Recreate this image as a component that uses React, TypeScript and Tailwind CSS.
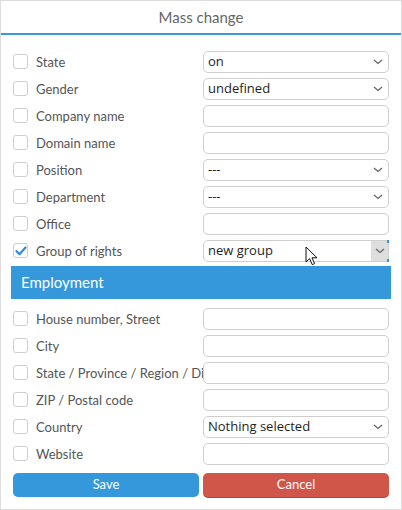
import React from 'react';

type Field = { label: string; kind: 'select' | 'input'; value?: string; checked?: boolean; focused?: boolean };

const general: Field[] = [
  { label: 'State', kind: 'select', value: 'on' },
  { label: 'Gender', kind: 'select', value: 'undefined' },
  { label: 'Company name', kind: 'input' },
  { label: 'Domain name', kind: 'input' },
  { label: 'Position', kind: 'select', value: '---' },
  { label: 'Department', kind: 'select', value: '---' },
  { label: 'Office', kind: 'input' },
  { label: 'Group of rights', kind: 'select', value: 'new group', checked: true, focused: true },
];

const employment: Field[] = [
  { label: 'House number, Street', kind: 'input' },
  { label: 'City', kind: 'input' },
  { label: 'State / Province / Region / District', kind: 'input' },
  { label: 'ZIP / Postal code', kind: 'input' },
  { label: 'Country', kind: 'select', value: 'Nothing selected' },
  { label: 'Website', kind: 'input' },
];

function Chevron() {
  return (
    <svg width="10" height="6" viewBox="0 0 10 6" fill="none">
      <path d="M1 1l4 3.5L9 1" stroke="#666" strokeWidth="1.3" />
    </svg>
  );
}

function Checkbox({ checked }: { checked?: boolean }) {
  return (
    <span className="flex h-[15px] w-[15px] shrink-0 items-center justify-center rounded-[3px] border border-[#cfcfcf] bg-white">
      {checked && (
        <svg width="12" height="10" viewBox="0 0 12 10" fill="none">
          <path d="M1.5 5.2l3 3L10.5 1.5" stroke="#2d8ad8" strokeWidth="2.2" strokeLinecap="round" strokeLinejoin="round" />
        </svg>
      )}
    </span>
  );
}

function Control({ f }: { f: Field }) {
  if (f.kind === 'input') {
    return <div className="h-[22px] w-[186px] rounded-[5px] border border-[#cfcfcf] bg-white" />;
  }
  if (f.focused) {
    return (
      <div className="relative flex h-[22px] w-[186px] items-center rounded-l-[5px] border border-[#cfcfcf] bg-white">
        <span className="flex-1 pl-[4px] text-[13px] text-[#1e1e1e] [font-family:'Open_Sans',sans-serif]">{f.value}</span>
        <span className="flex h-full w-[17px] items-center justify-center bg-[#dedede]">
          <Chevron />
        </span>
        <span className="absolute right-[-1px] top-[-1px] h-[3px] w-[2px] bg-[#3498db]" />
        <span className="absolute bottom-[-1px] right-[-1px] h-[3px] w-[2px] bg-[#3498db]" />
        <svg className="absolute left-[101px] top-[5px]" width="14" height="20" viewBox="0 0 14 20">
          <path d="M1 1v15l3.6-3.4 2.6 6 2.4-1-2.6-5.8H12z" fill="#fff" stroke="#111" strokeWidth="1" strokeLinejoin="round" />
        </svg>
      </div>
    );
  }
  return (
    <div className="flex h-[22px] w-[186px] items-center justify-between rounded-[5px] border border-[#cfcfcf] bg-white pl-[4px] pr-[5px]">
      <span className="text-[13px] text-[#1e1e1e] [font-family:'Open_Sans',sans-serif]">{f.value}</span>
      <Chevron />
    </div>
  );
}

function Row({ f }: { f: Field }) {
  return (
    <div className="flex h-[27px] items-center">
      <div className="flex w-[190px] items-center gap-[8px] overflow-hidden whitespace-nowrap">
        <Checkbox checked={f.checked} />
        <span className="text-[13px] text-[#555] pt-[2px]">{f.label}</span>
      </div>
      <Control f={f} />
    </div>
  );
}

export default function App() {
  return (
    <div className="flex h-[510px] w-[402px] flex-col border border-[#dcdcdc] bg-white [font-family:Lato,sans-serif]">
      <div className="flex h-[32px] items-center justify-center text-[15px] text-[#666]">Mass change</div>
      <div className="h-[2px] bg-[#3a9ad9]" />
      <div className="flex flex-col px-[12px] pt-[13px]">
        {general.map((f) => (
          <Row key={f.label} f={f} />
        ))}
        <div className="mx-[-2px] mb-[6px] mt-[2px] flex h-[33px] items-center bg-[#3498db] px-[10px] text-[15px] text-white">
          Employment
        </div>
        {employment.map((f) => (
          <Row key={f.label} f={f} />
        ))}
        <div className="mt-[6px] flex gap-[4px]">
          <button className="h-[24px] w-[186px] rounded-[5px] bg-[#3498db] text-[13px] text-white">Save</button>
          <button className="h-[24px] w-[186px] rounded-[5px] bg-[#d0564a] text-[13px] text-white shadow-[0_1px_0_#b0443a]">Cancel</button>
        </div>
      </div>
    </div>
  );
}
